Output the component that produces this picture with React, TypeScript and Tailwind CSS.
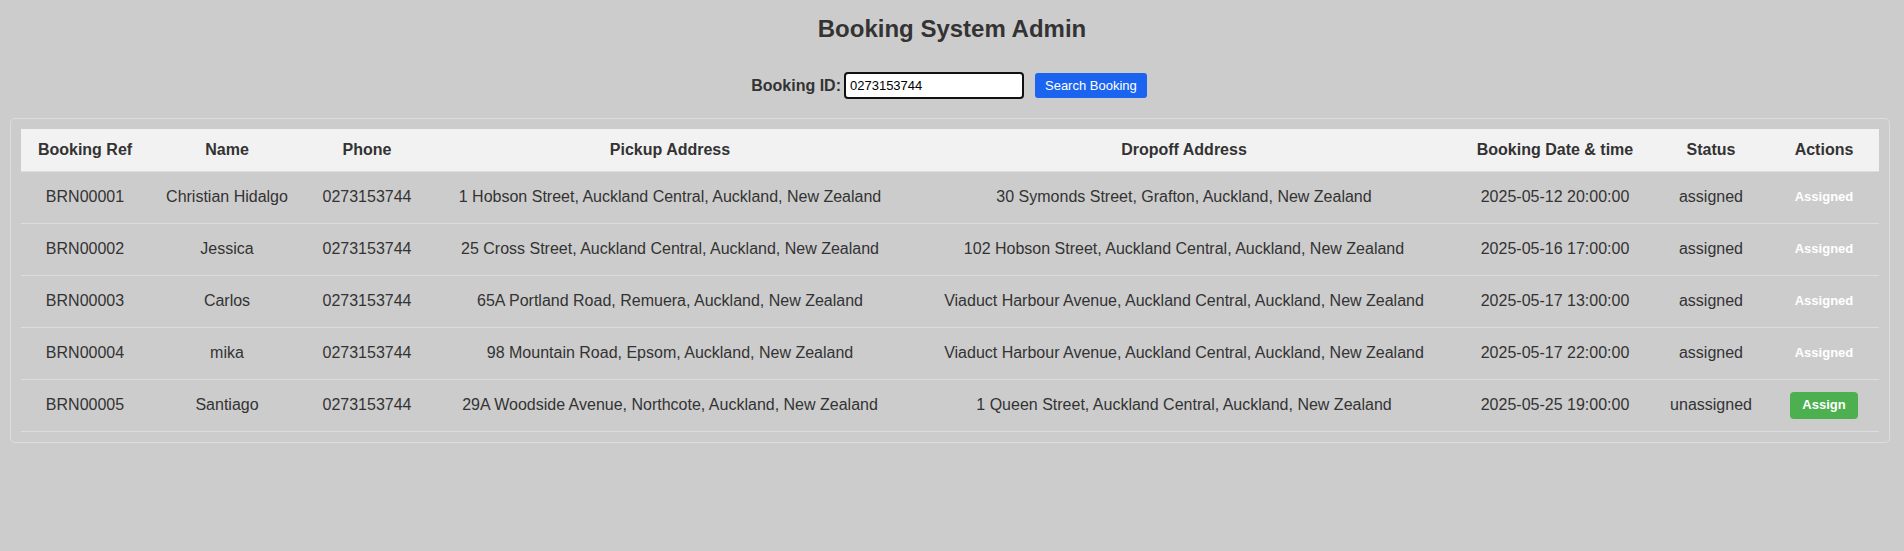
import React from "react";

const rows = [
  { ref: "BRN00001", name: "Christian Hidalgo", phone: "0273153744", pickup: "1 Hobson Street, Auckland Central, Auckland, New Zealand", dropoff: "30 Symonds Street, Grafton, Auckland, New Zealand", date: "2025-05-12 20:00:00", status: "assigned" },
  { ref: "BRN00002", name: "Jessica", phone: "0273153744", pickup: "25 Cross Street, Auckland Central, Auckland, New Zealand", dropoff: "102 Hobson Street, Auckland Central, Auckland, New Zealand", date: "2025-05-16 17:00:00", status: "assigned" },
  { ref: "BRN00003", name: "Carlos", phone: "0273153744", pickup: "65A Portland Road, Remuera, Auckland, New Zealand", dropoff: "Viaduct Harbour Avenue, Auckland Central, Auckland, New Zealand", date: "2025-05-17 13:00:00", status: "assigned" },
  { ref: "BRN00004", name: "mika", phone: "0273153744", pickup: "98 Mountain Road, Epsom, Auckland, New Zealand", dropoff: "Viaduct Harbour Avenue, Auckland Central, Auckland, New Zealand", date: "2025-05-17 22:00:00", status: "assigned" },
  { ref: "BRN00005", name: "Santiago", phone: "0273153744", pickup: "29A Woodside Avenue, Northcote, Auckland, New Zealand", dropoff: "1 Queen Street, Auckland Central, Auckland, New Zealand", date: "2025-05-25 19:00:00", status: "unassigned" },
];

const headers = ["Booking Ref", "Name", "Phone", "Pickup Address", "Dropoff Address", "Booking Date & time", "Status", "Actions"];

export default function App() {
  return (
    <div className="min-h-[551px] w-full bg-[#cccccc] text-[#333333] font-['Liberation_Sans',Arial,sans-serif] pt-[15px]">
      <h2 className="text-center text-[24px] leading-[27px] font-bold">Booking System Admin</h2>
      <div className="mt-[30px] flex items-center justify-center h-[27px] pr-[6px]">
        <label className="text-[16px] font-bold mr-[3px]">Booking ID:</label>
        <input
          defaultValue="0273153744"
          className="w-[180px] h-[27px] bg-white border-2 border-[#111111] rounded-[4px] px-[4px] text-[13px] text-black outline-none"
        />
        <button className="ml-[11px] h-[25px] px-[10px] rounded-[3px] bg-[#1b64f0] text-white text-[13px]">Search Booking</button>
      </div>
      <div className="mt-[19px] ml-[10px] w-[1880px] border border-[#dddddd] rounded-[5px] p-[10px]">
        <table className="w-[1858px] table-fixed border-collapse text-[16px]">
          <colgroup>
            <col className="w-[128px]" />
            <col className="w-[156px]" />
            <col className="w-[124px]" />
            <col className="w-[482px]" />
            <col className="w-[546px]" />
            <col className="w-[196px]" />
            <col className="w-[116px]" />
            <col className="w-[110px]" />
          </colgroup>
          <thead>
            <tr className="bg-[#f2f2f2] border-b border-[#dddddd]">
              {headers.map((h) => (
                <th key={h} className="px-0 py-[12px] h-[42px] font-bold text-center leading-[17px] whitespace-nowrap">{h}</th>
              ))}
            </tr>
          </thead>
          <tbody>
            {rows.map((r) => (
              <tr key={r.ref} className="border-b border-[#dddddd]">
                <td className="py-[12px] text-center whitespace-nowrap">{r.ref}</td>
                <td className="py-[12px] text-center whitespace-nowrap">{r.name}</td>
                <td className="py-[12px] text-center whitespace-nowrap">{r.phone}</td>
                <td className="py-[12px] text-center whitespace-nowrap">{r.pickup}</td>
                <td className="py-[12px] text-center whitespace-nowrap">{r.dropoff}</td>
                <td className="py-[12px] text-center whitespace-nowrap">{r.date}</td>
                <td className="py-[12px] text-center whitespace-nowrap">{r.status}</td>
                <td className="py-[12px] text-center whitespace-nowrap">
                  {r.status === "assigned" ? (
                    <button disabled className="h-[27px] px-[12px] rounded-[4px] bg-[#cccccc] text-white text-[13px] font-bold align-middle">Assigned</button>
                  ) : (
                    <button className="h-[27px] px-[12px] rounded-[4px] bg-[#4caf50] text-white text-[13px] font-bold align-middle">Assign</button>
                  )}
                </td>
              </tr>
            ))}
          </tbody>
        </table>
      </div>
    </div>
  );
}
